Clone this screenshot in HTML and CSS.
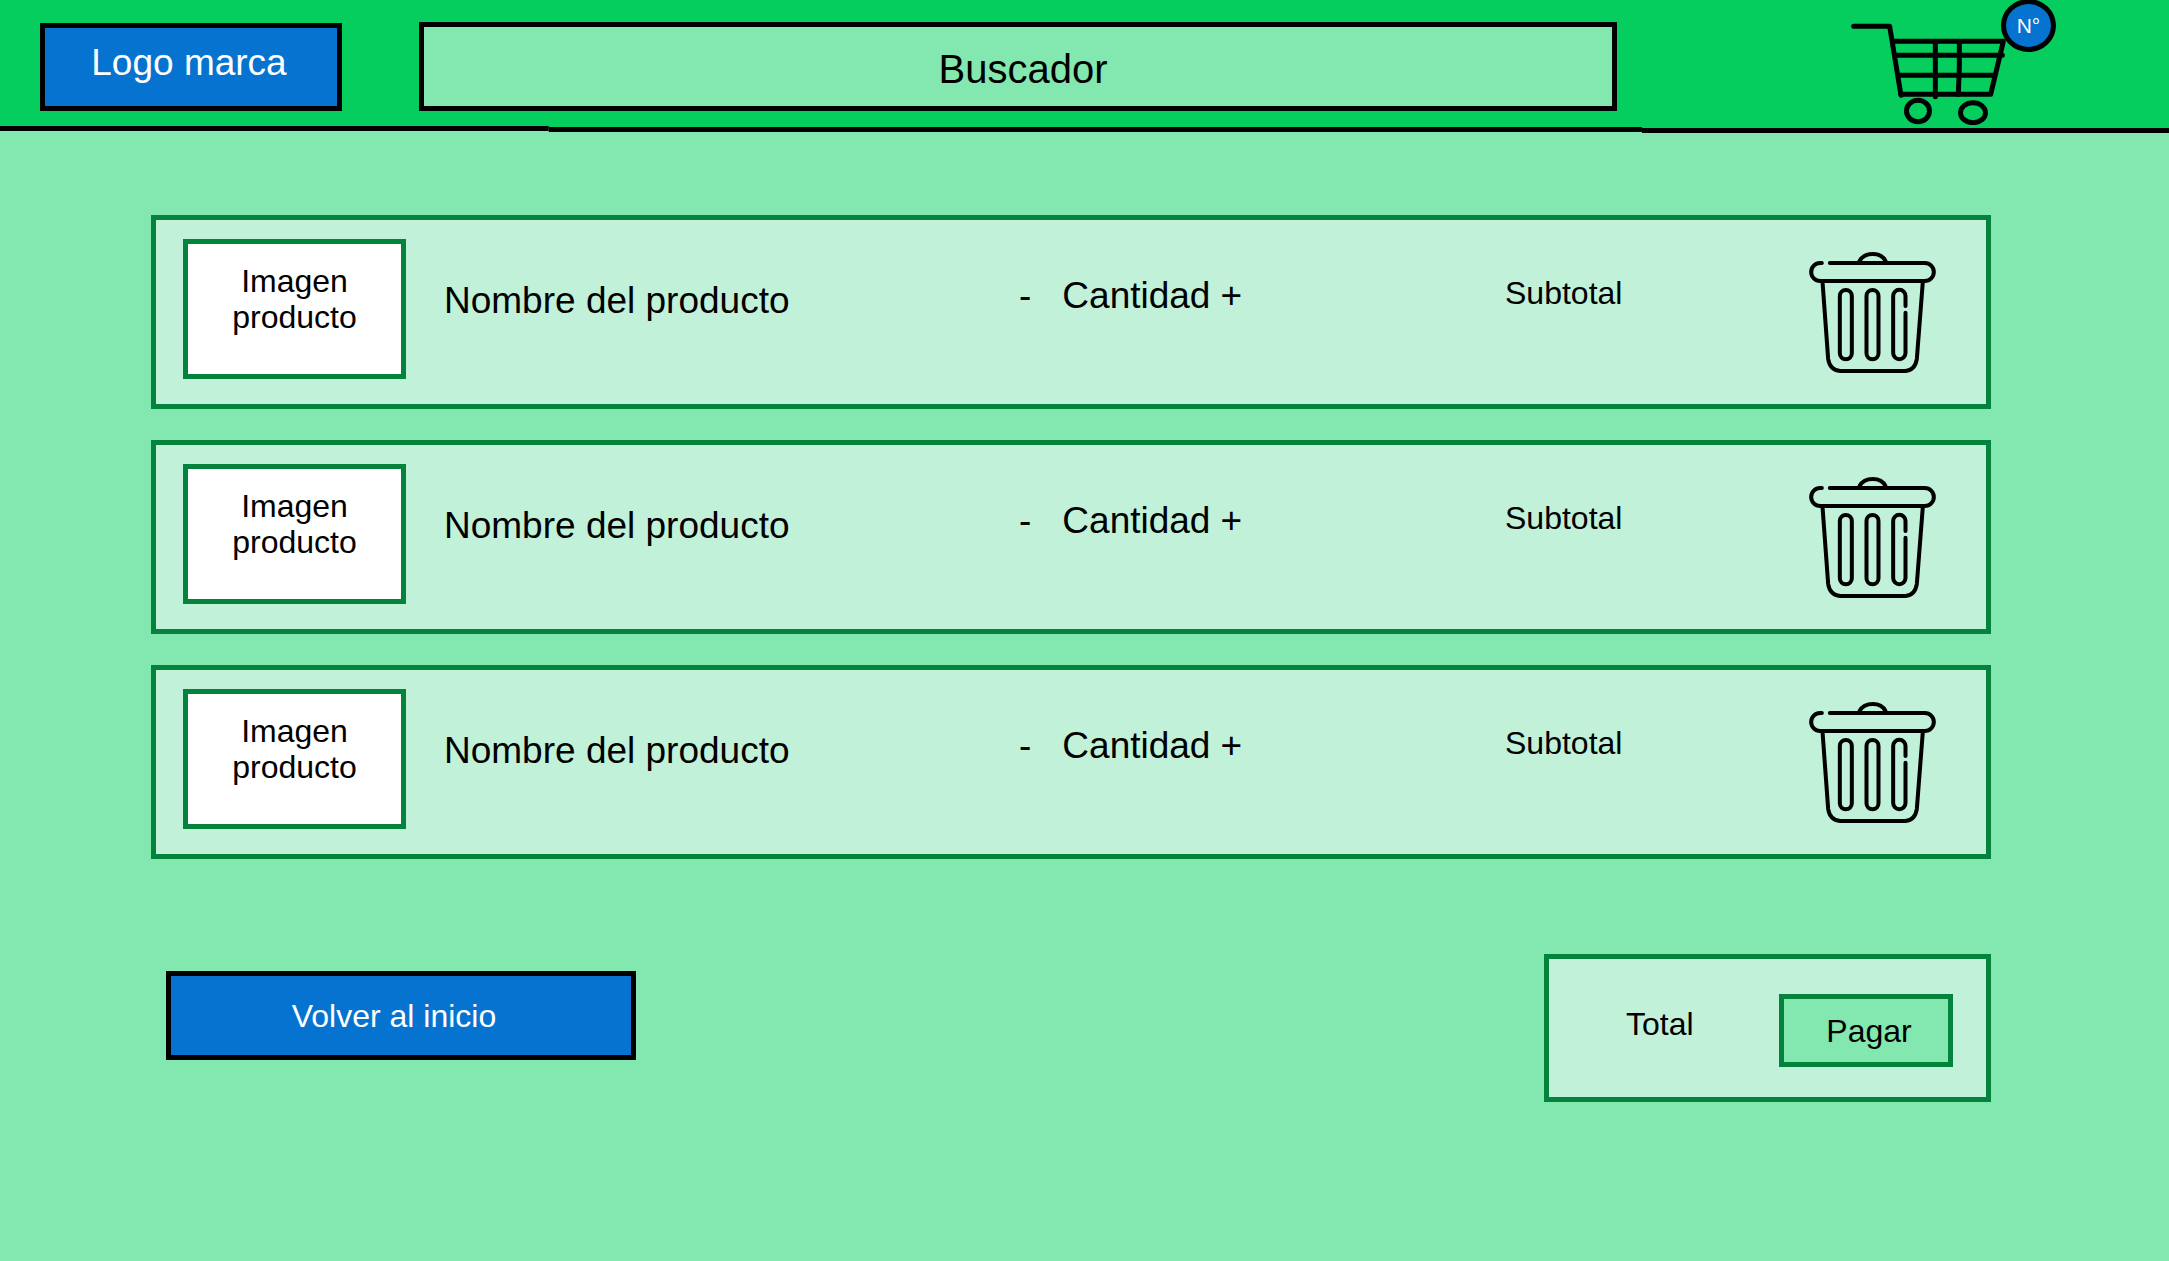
FILE: index.html
```html
<!DOCTYPE html>
<html lang="es">
<head>
<meta charset="utf-8">
<meta name="viewport" content="width=device-width, initial-scale=1">
<title>Carrito</title>
<link rel="stylesheet" href="styles.css">
</head>
<body>
<svg class="sprite" aria-hidden="true">
  <symbol id="trash" viewBox="85 141 380 363">
    <g fill="none" stroke="currentColor" stroke-width="12" stroke-linecap="round" stroke-linejoin="round">
      <path d="M123 174H118a27 27 0 0 0 0 54H432a27 27 0 0 0 0-54H147"/>
      <path d="M236 168C252 140 300 140 314 168"/>
      <path d="M125 230L142 462Q147 495 178 498H374Q403 495 408 462L426 230"/>
      <rect x="177" y="255" width="36" height="208" rx="18"/>
      <rect x="257" y="255" width="36" height="208" rx="18"/>
      <path d="M374 303V273a18.500 18.500 0 0 0-37 0V444a18.500 18.500 0 0 0 37 0V323"/>
    </g>
  </symbol>
</svg>

<header class="header">
  <div class="header-bar">
    <a class="logo" href="#">Logo marca</a>
    <input class="search" type="text" placeholder="Buscador" aria-label="Buscador">
    <a class="cart" href="#" aria-label="Carrito">
      <svg class="cart-icon" viewBox="93 0 615 375" aria-hidden="true">
        <g fill="none" stroke="currentColor" stroke-width="15" stroke-linecap="round" stroke-linejoin="round">
          <path d="M101 79H209L243 286"/>
          <path d="M219 124H550L512 283H243"/>
          <path d="M228 166H547M238 226H520"/>
          <path d="M346 124V290M418 124V200L415 283"/>
          <ellipse cx="294" cy="333" rx="34.500" ry="32"/>
          <ellipse cx="459" cy="338" rx="37.500" ry="30"/>
        </g>
      </svg>
      <span class="badge">N°</span>
    </a>
  </div>
  <svg class="header-rule" aria-hidden="true">
    <rect class="rule-fill" x="25.3%" width="74.7%" height="1"/>
    <rect class="rule-fill" x="75.7%" width="24.3%" height="2"/>
    <rect y="0" width="25.3%" height="5"/>
    <rect x="25.3%" y="1" width="50.4%" height="5"/>
    <rect x="75.7%" y="2" width="24.3%" height="5"/>
  </svg>
</header>

<main class="page">
  <ul class="items">
    <li class="item">
      <div class="item-image">Imagen producto</div>
      <div class="item-name">Nombre del producto</div>
      <div class="quantity">
        <button class="step" type="button" aria-label="Quitar uno">-</button>
        <span class="quantity-value">Cantidad</span>
        <button class="step" type="button" aria-label="Agregar uno">+</button>
      </div>
      <div class="subtotal">Subtotal</div>
      <button class="remove" type="button" aria-label="Eliminar"><svg class="trash-icon"><use href="#trash"/></svg></button>
    </li>
    <li class="item">
      <div class="item-image">Imagen producto</div>
      <div class="item-name">Nombre del producto</div>
      <div class="quantity">
        <button class="step" type="button" aria-label="Quitar uno">-</button>
        <span class="quantity-value">Cantidad</span>
        <button class="step" type="button" aria-label="Agregar uno">+</button>
      </div>
      <div class="subtotal">Subtotal</div>
      <button class="remove" type="button" aria-label="Eliminar"><svg class="trash-icon"><use href="#trash"/></svg></button>
    </li>
    <li class="item">
      <div class="item-image">Imagen producto</div>
      <div class="item-name">Nombre del producto</div>
      <div class="quantity">
        <button class="step" type="button" aria-label="Quitar uno">-</button>
        <span class="quantity-value">Cantidad</span>
        <button class="step" type="button" aria-label="Agregar uno">+</button>
      </div>
      <div class="subtotal">Subtotal</div>
      <button class="remove" type="button" aria-label="Eliminar"><svg class="trash-icon"><use href="#trash"/></svg></button>
    </li>
  </ul>

  <div class="summary">
    <a class="back" href="#">Volver al inicio</a>
    <div class="total">
      <span class="total-label">Total</span>
      <button class="pay" type="button">Pagar</button>
    </div>
  </div>
</main>
</body>
</html>
```

FILE: styles.css
```css
:root {
  --bar: #05ce5f;
  --page: #83e8af;
  --card: #c1f1d8;
  --edge: #03833b;
  --blue: #0573cf;
}

* {
  box-sizing: border-box;
}

body {
  margin: 0;
  background: var(--page);
  color: #000;
  font-family: "Liberation Sans", Arial, sans-serif;
  font-size: 32px;
  line-height: 36px;
}

a {
  color: inherit;
  text-decoration: none;
}

button {
  padding: 0;
  border: 0;
  background: none;
  color: inherit;
  font: inherit;
  cursor: pointer;
}

.sprite {
  display: none;
}

/* Header */
.header-bar {
  display: flex;
  align-items: flex-end;
  padding: 0 113px 0 40px;
  background: var(--bar);
}

.logo {
  display: flex;
  align-items: center;
  justify-content: center;
  width: 302px;
  height: 88px;
  margin-bottom: 15px;
  padding: 0 4px 8px 0;
  border: 5px solid #000;
  background: var(--blue);
  color: #fff;
  font-size: 37px;
  line-height: 42px;
}

.search {
  flex: 1;
  min-width: 0;
  height: 89px;
  margin: 0 234px 15px 77px;
  padding: 6px 0 0 10px;
  border: 5px solid #000;
  border-radius: 0;
  background: var(--page);
  color: #000;
  font-family: inherit;
  font-size: 40px;
  text-align: center;
}

.search::placeholder {
  color: #000;
  opacity: 1;
}

.cart {
  position: relative;
  width: 205px;
  height: 126px;
}

.cart-icon {
  display: block;
  width: 205px;
  height: 125px;
}

.badge {
  position: absolute;
  top: -1px;
  right: 0;
  display: flex;
  align-items: center;
  justify-content: center;
  width: 55px;
  height: 53px;
  border: 5px solid #000;
  border-radius: 50%;
  background: var(--blue);
  color: #fff;
  font-size: 21px;
}

.header-rule {
  display: block;
  width: 100%;
  height: 7px;
}

.rule-fill {
  fill: var(--bar);
}

/* Cart items */
.page {
  padding: 82px 178px 40px 151px;
}

.items {
  display: grid;
  gap: 31px;
  margin: 0;
  padding: 0;
  list-style: none;
}

.item {
  display: grid;
  grid-template-columns: 223px 537fr 448fr 266fr 127px;
  column-gap: 38px;
  align-items: start;
  padding: 19px 50px 25px 27px;
  border: 5px solid var(--edge);
  background: var(--card);
}

.item-image {
  height: 140px;
  padding: 19px 40px;
  border: 5px solid var(--edge);
  background: #fff;
  text-align: center;
}

.item-name {
  margin-top: 41px;
  font-size: 37px;
  line-height: 42px;
}

.quantity {
  display: flex;
  margin-top: 36px;
  font-size: 37px;
  line-height: 42px;
}

.quantity-value {
  margin: 0 10px 0 31px;
}

.subtotal {
  margin-top: 36px;
}

.remove {
  margin-top: 13px;
}

.trash-icon {
  display: block;
  width: 127px;
  height: 121px;
}

/* Totals and actions */
.summary {
  display: flex;
  align-items: flex-start;
  justify-content: space-between;
  margin-top: 95px;
}

.back {
  display: flex;
  align-items: center;
  justify-content: center;
  width: 470px;
  height: 89px;
  margin: 17px 0 0 15px;
  padding-right: 14px;
  border: 5px solid #000;
  background: var(--blue);
  color: #fff;
}

.total {
  display: flex;
  align-items: flex-start;
  justify-content: space-between;
  width: 447px;
  height: 148px;
  padding: 35px 33px 0 77px;
  border: 5px solid var(--edge);
  background: var(--card);
}

.total-label {
  margin-top: 12px;
}

.pay {
  width: 174px;
  height: 73px;
  padding-left: 6px;
  border: 5px solid var(--edge);
  background: var(--page);
}
```
